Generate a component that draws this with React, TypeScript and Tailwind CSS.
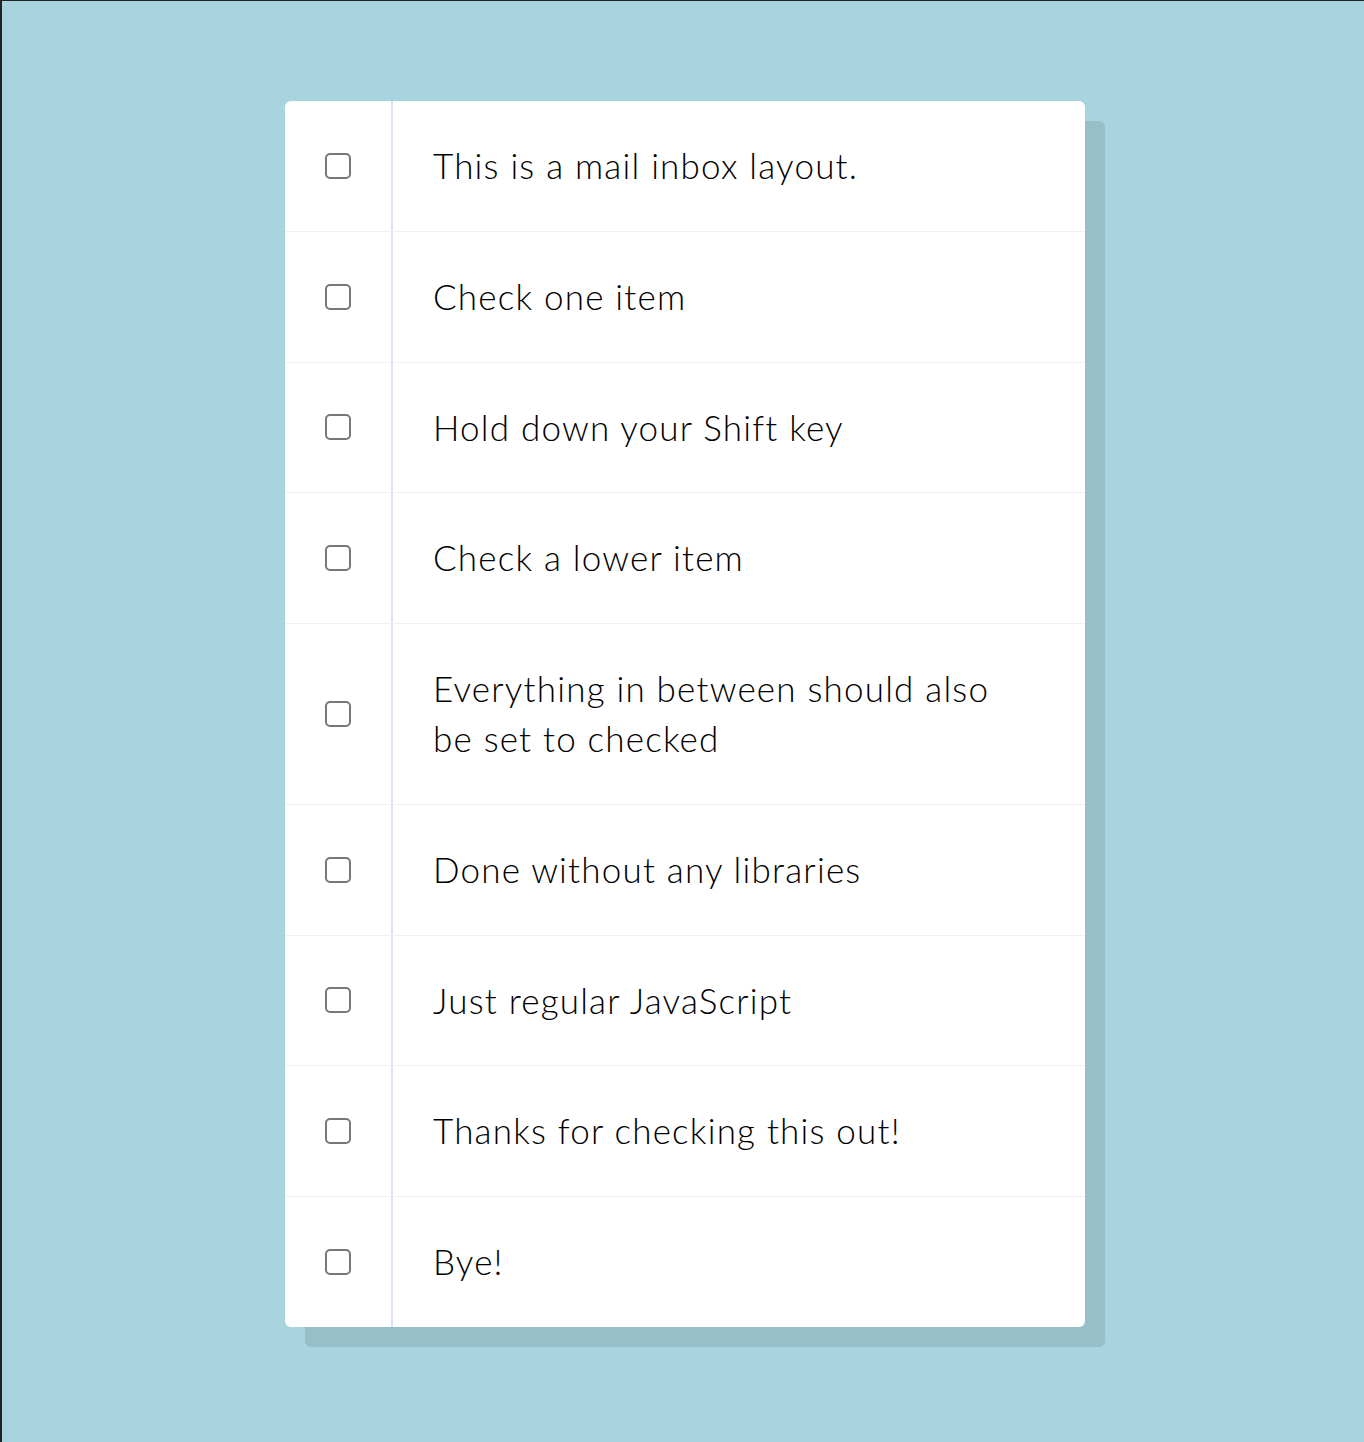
import React from "react";

const items = [
  "This is a mail inbox layout.",
  "Check one item",
  "Hold down your Shift key",
  "Check a lower item",
  "Everything in between should also be set to checked",
  "Done without any libraries",
  "Just regular JavaScript",
  "Thanks for checking this out!",
  "Bye!",
];

function Item({ text }: { text: string }) {
  return (
    <div className="flex items-stretch border-b border-[#f0f0f0] last:border-b-0">
      <div className="w-[106px] flex items-center justify-center shrink-0">
        <input
          type="checkbox"
          className="appearance-none w-[26px] h-[26px] border-2 border-[#787878] rounded-[5px] bg-white"
        />
      </div>
      <p className="flex-1 border-l-2 border-[#d8e3fb] pl-10 pr-16 py-10 text-[35px] leading-[49.8px] tracking-[1.2px] font-light text-black">
        {text}
      </p>
    </div>
  );
}

export default function App() {
  return (
    <div
      className="min-h-[1442px] bg-[#a8d4e0] border-l-2 border-t border-[#222] pl-1 pt-[100px]"
      style={{ fontFamily: "Lato, 'Liberation Sans', sans-serif" }}
    >
      <div className="w-[800px] mx-auto bg-white rounded-[6px] shadow-[20px_20px_0_#97bfca]">
        {items.map((t) => (
          <Item key={t} text={t} />
        ))}
      </div>
    </div>
  );
}
